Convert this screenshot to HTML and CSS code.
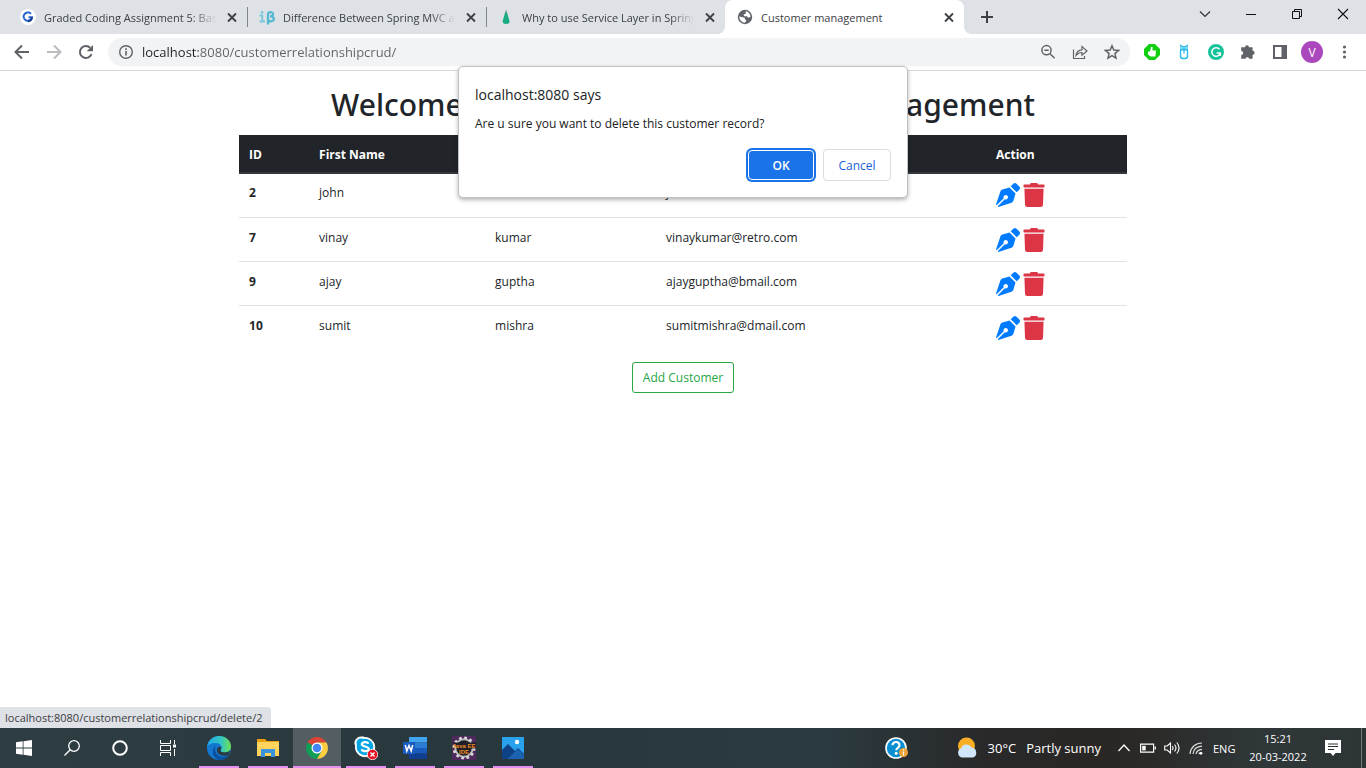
FILE: index.html
```html
<!DOCTYPE html>
<html lang="en">
<head>
<meta charset="utf-8">
<title>Customer management</title>
<link rel="stylesheet" href="styles.css">
</head>
<body>
<svg class="defs" aria-hidden="true">
  <symbol id="close" viewBox="0 0 16 16"><path d="M4 4.500l8 8M12 4.500l-8 8" stroke="#3c4043" stroke-width="1.8" fill="none"/></symbol>
  <symbol id="pen" viewBox="0 0 512 512"><path fill="#007bff" d="M136.6 138.79a64.003 64.003 0 0 0-43.31 41.35L0 460l14.69 14.69L164.8 324.58c-2.99-6.26-4.8-13.18-4.8-20.58 0-26.51 21.49-48 48-48s48 21.49 48 48-21.49 48-48 48c-7.4 0-14.32-1.81-20.58-4.8L37.31 497.31 52 512l279.86-93.29a64.003 64.003 0 0 0 41.35-43.31L416 224 288 96l-151.4 42.79zm361.34-64.62l-60.11-60.11c-18.75-18.75-49.16-18.75-67.91 0l-56.55 56.55 128.02 128.02 56.55-56.55c18.75-18.75 18.75-49.15 0-67.91z"/></symbol>
  <symbol id="trash" viewBox="0 0 448 512"><path fill="#dc3545" d="M432 32H312l-9.4-18.7A24 24 0 0 0 281.1 0H166.8a23.72 23.72 0 0 0-21.4 13.3L136 32H16A16 16 0 0 0 0 48v32a16 16 0 0 0 16 16h416a16 16 0 0 0 16-16V48a16 16 0 0 0-16-16zM32 467a48 48 0 0 0 47.9 45h288.200a48 48 0 0 0 47.9-45L428 124H20z"/></symbol>
</svg>

<header class="browser">
  <div class="tabstrip">
    <div class="tabs">
      <div class="tab">
        <svg class="i16" viewBox="0 0 16 16"><circle cx="8" cy="8" r="8" fill="#fff"/><path d="M11 4.800A4.200 4.200 0 1 0 12 8.200H8.500" fill="none" stroke="#2a66d0" stroke-width="2"/><path d="M12 8.200A4.200 4.200 0 0 1 8 12.200" fill="none" stroke="#14398f" stroke-width="2"/></svg>
        <button class="tab-title fade">Graded Coding Assignment 5: Basic</button>
        <button class="tab-close" aria-label="Close tab"><svg class="i16"><use href="#close"/></svg></button>
      </div>
      <div class="tab divided">
        <svg class="i16" viewBox="0 0 16 16"><path d="M.5 6.500h2.800v6M.5 12.500h5.500" fill="none" stroke="#7cc8dc" stroke-width="2"/><circle cx="3.100" cy="3.500" r="1.400" fill="#7cc8dc"/><path d="M9 15.500V5.500C9 2.300 14 2.300 14 5.200C14 7 12.500 7.300 11 7.300C16 7.300 16 12.300 12 12.300C10.500 12.300 9.500 11.700 9 11" fill="none" stroke="#55b9d3" stroke-width="2.300"/></svg>
        <button class="tab-title fade">Difference Between Spring MVC and</button>
        <button class="tab-close" aria-label="Close tab"><svg class="i16"><use href="#close"/></svg></button>
      </div>
      <div class="tab divided">
        <svg class="i16" viewBox="0 0 16 16"><path d="M7.300 3h1.600L11.500 12q.3 3-3.400 3t-3.400-3z" fill="#1bab82"/><path d="M7.600 1h1v2.500h-1z" fill="#888"/></svg>
        <button class="tab-title fade">Why to use Service Layer in Spring</button>
        <button class="tab-close" aria-label="Close tab"><svg class="i16"><use href="#close"/></svg></button>
      </div>
      <div class="tab active">
        <svg class="i16" viewBox="0 0 16 16"><circle cx="8" cy="8" r="7.200" fill="#5f6368"/><path d="M8.500 2.300C11 2.500 13.500 5 13.600 7.800L11.500 8.800 9.800 7.300H7.500L6.400 5.700 8.800 4.500zM2.300 7.500L5.500 8.200 7.800 8.700V10.500L9.500 11 8 13.700C4.800 13.600 2.300 11 2.300 7.500z" fill="#fff"/></svg>
        <button class="tab-title">Customer management</button>
        <button class="tab-close" aria-label="Close tab"><svg class="i16"><use href="#close"/></svg></button>
      </div>
      <button class="new-tab" aria-label="New tab"><svg class="i16" viewBox="0 0 16 16"><path d="M8 2v12M2 8h12" stroke="#3c4043" stroke-width="2"/></svg></button>
    </div>
    <div class="window-buttons">
      <button aria-label="Search tabs"><svg class="i16" viewBox="0 0 16 16"><path d="M3 5.500l5 5 5-5" fill="none" stroke="#333" stroke-width="1.200"/></svg></button>
      <button aria-label="Minimize"><svg class="i16" viewBox="0 0 16 16"><path d="M3 8.500h10" stroke="#111"/></svg></button>
      <button aria-label="Restore"><svg class="i16" viewBox="0 0 16 16"><path d="M3.500 5.500h7v7h-7zM5.500 5.500v-2h7v7h-2" fill="none" stroke="#111"/></svg></button>
      <button aria-label="Close"><svg class="i16" viewBox="0 0 16 16"><path d="M3 3l10 10M13 3L3 13" stroke="#111" stroke-width="1.100"/></svg></button>
    </div>
  </div>
  <div class="toolbar">
    <button class="tool" aria-label="Back"><svg class="i16" viewBox="0 0 16 16"><path d="M15 8H2M8 1.500L1.500 8 8 14.500" fill="none" stroke="#5f6368" stroke-width="2"/></svg></button>
    <button class="tool" aria-label="Forward"><svg class="i16" viewBox="0 0 16 16"><path d="M1 8h13M8 1.500L14.500 8 8 14.500" fill="none" stroke="#bbbdc0" stroke-width="2"/></svg></button>
    <button class="tool" aria-label="Reload"><svg class="i16" viewBox="0 0 16 16"><path d="M13.500 10.200A6 6 0 1 1 12.200 3.800" fill="none" stroke="#5f6368" stroke-width="2"/><path d="M15 1v6.300H8.700z" fill="#5f6368"/></svg></button>
    <div class="omnibox">
      <button class="tool" aria-label="Site information"><svg class="i16" viewBox="0 0 16 16"><circle cx="8" cy="8" r="6.300" fill="none" stroke="#5f6368" stroke-width="1.400"/><path d="M8 7v4.500M8 4.300v1.600" stroke="#5f6368" stroke-width="1.600"/></svg></button>
      <input class="url" type="text" aria-label="Address" value="localhost:8080/customerrelationshipcrud/">
      <button class="tool" aria-label="Zoom"><svg class="i16" viewBox="0 0 16 16"><circle cx="6.500" cy="6.200" r="4.600" fill="none" stroke="#5f6368" stroke-width="1.500"/><path d="M4.300 6.200h4.400M10 9.700l4.600 4.600" stroke="#5f6368" stroke-width="1.500"/></svg></button>
      <button class="tool" aria-label="Share"><svg class="i16" viewBox="0 0 16 16"><path d="M1.500 5.500v9h11V12M4 11.500C4.300 8 6.500 6 10 5.800V2.500L15 7l-5 4.300V8.500C7.300 8.500 5.500 9.500 4 11.500z" fill="none" stroke="#5f6368" stroke-width="1.200"/></svg></button>
      <button class="tool" aria-label="Bookmark"><svg class="i16" viewBox="0 0 16 16"><path d="M8 1.800l1.800 4.300 4.700.4-3.600 3.100 1.100 4.600L8 11.700l-4 2.500 1.100-4.600L1.500 6.500l4.700-.4z" fill="none" stroke="#5f6368" stroke-width="1.500"/></svg></button>
    </div>
    <button class="tool ext" aria-label="Like extension"><svg class="i16" viewBox="0 0 16 16"><path d="M5 0h6l5 5v6l-5 5H5l-5-5V5z" fill="#12cf12"/><path d="M4 7.500h2L7 3h1.500v3.500H12l-.6 6H6.500L4 10.500z" fill="#fff"/></svg></button>
    <button class="tool ext" aria-label="Owl extension"><svg class="i16" viewBox="0 0 16 16"><path d="M4.500 6.500V12q0 2.500 2.500 2.500h2q2.500 0 2.500-2.500V6.500M4 5.800h8" fill="none" stroke="#27bcea" stroke-width="1.400"/><path d="M4 1l4 2.300L12 1v4H4z" fill="#7fd8f2"/><path d="M4 1l2.500 1.500h3L12 1M8 3.500v6" fill="none" stroke="#27bcea" stroke-width="1.200"/></svg></button>
    <button class="tool ext" aria-label="Grammar extension"><svg class="i16" viewBox="0 0 16 16"><circle cx="8" cy="8" r="8" fill="#15c39a"/><path d="M11.500 5.300A4.300 4.300 0 1 0 12.300 9H8.700M12.300 8.500V12" fill="none" stroke="#fff" stroke-width="1.500"/></svg></button>
    <button class="tool ext" aria-label="Extensions"><svg class="i16" viewBox="0 0 16 16"><path d="M5 3.300a2 2 0 0 1 4 0h3.600v3.500a2 2 0 0 1 0 4.100v3.800H9.200a1.900 1.900 0 0 0-3.700 0H1.200v-3.600a2 2 0 0 0 0-4V3.300z" fill="#5f6368"/></svg></button>
    <button class="tool ext" aria-label="Side panel"><svg class="i16" viewBox="0 0 16 16"><path d="M1 1h14v14H1zM3 3v10h6.500V3z" fill="#5f6368" fill-rule="evenodd"/></svg></button>
    <button class="tool ext avatar" aria-label="Profile">V</button>
    <button class="tool ext" aria-label="Menu"><svg class="i16" viewBox="0 0 16 16"><circle cx="8.500" cy="3" r="1.600" fill="#5f6368"/><circle cx="8.500" cy="8" r="1.600" fill="#5f6368"/><circle cx="8.500" cy="13" r="1.600" fill="#5f6368"/></svg></button>
  </div>
</header>

<main class="page">
  <h1>Welcome to Customer Relationship Management</h1>
  <table>
    <colgroup><col class="c-id"><col class="c-first"><col class="c-last"><col class="c-mail"><col class="c-action"></colgroup>
    <thead><tr><th scope="col">ID</th><th scope="col">First Name</th><th scope="col">Last Name</th><th scope="col">Email</th><th scope="col">Action</th></tr></thead>
    <tbody>
      <tr><th scope="row">2</th><td>john</td><td>cena</td><td>johncena@mail.com</td><td><div class="actions"><a href="#" aria-label="Edit"><svg class="pen"><use href="#pen"/></svg></a><a href="#" aria-label="Delete"><svg class="trash"><use href="#trash"/></svg></a></div></td></tr>
      <tr><th scope="row">7</th><td>vinay</td><td>kumar</td><td>vinaykumar@retro.com</td><td><div class="actions"><a href="#" aria-label="Edit"><svg class="pen"><use href="#pen"/></svg></a><a href="#" aria-label="Delete"><svg class="trash"><use href="#trash"/></svg></a></div></td></tr>
      <tr><th scope="row">9</th><td>ajay</td><td>guptha</td><td>ajayguptha@bmail.com</td><td><div class="actions"><a href="#" aria-label="Edit"><svg class="pen"><use href="#pen"/></svg></a><a href="#" aria-label="Delete"><svg class="trash"><use href="#trash"/></svg></a></div></td></tr>
      <tr><th scope="row">10</th><td>sumit</td><td>mishra</td><td>sumitmishra@dmail.com</td><td><div class="actions"><a href="#" aria-label="Edit"><svg class="pen"><use href="#pen"/></svg></a><a href="#" aria-label="Delete"><svg class="trash"><use href="#trash"/></svg></a></div></td></tr>
    </tbody>
  </table>
  <button class="add">Add Customer</button>
  <div class="status">localhost:8080/customerrelationshipcrud/delete/2</div>
</main>

<div class="dialog" role="alertdialog" aria-labelledby="dlg-title" aria-describedby="dlg-text">
  <h2 id="dlg-title">localhost:8080 says</h2>
  <p id="dlg-text">Are u sure you want to delete this customer record?</p>
  <div class="dialog-buttons"><button class="ok">OK</button><button class="cancel">Cancel</button></div>
</div>

<footer class="taskbar">
  <div class="system">
    <button aria-label="Start"><svg class="i16" viewBox="0 0 16 16"><path d="M0 2.300L6.700 1.300v6.300H0zM7.500 1.200L16 0v7.600H7.500zM0 8.400h6.700v6.300L0 13.700zM7.500 8.400H16V16l-8.500-1.200z" fill="#fff"/></svg></button>
    <button aria-label="Search"><svg class="i16" viewBox="0 0 16 16"><circle cx="10" cy="6" r="5.300" fill="none" stroke="#fff" stroke-width="1.300"/><path d="M6.200 9.800L.5 15.500" stroke="#fff" stroke-width="1.300"/></svg></button>
    <button aria-label="Cortana"><svg class="i16" viewBox="0 0 16 16"><circle cx="8" cy="8" r="6.800" fill="none" stroke="#fff" stroke-width="2"/></svg></button>
    <button aria-label="Task view"><svg class="i16" viewBox="0 0 16 16"><path d="M.5 0v3.500h10V0M.5 16v-3.500h10V16M.5 5.500h10v5H.5zM14.500 0v4M14.500 9v7" fill="none" stroke="#fff"/><path d="M13 4.500h3v3h-3z" fill="#fff"/></svg></button>
  </div>
  <div class="apps">
    <button aria-label="Edge"><svg class="i24" viewBox="0 0 24 24"><defs><linearGradient id="e1"><stop offset="0" stop-color="#1fa9e8"/><stop offset=".6" stop-color="#35c8c0"/><stop offset="1" stop-color="#6fe04c"/></linearGradient></defs><circle cx="12" cy="12" r="12" fill="#1377cf"/><path d="M.2 11C1 4 6 0 12 0c7 0 12 5 12 10.500 0 4-3 6-6.300 6-2.500 0-4.200-.9-4.200-1.800 0-.8 1.200-1.200 1.200-3.200 0-2.700-2.700-4.500-6-4.500C4 7 1 8.700.2 11z" fill="url(#e1)"/><path d="M9 9c-2 3-1 8 2.500 10.500 3 2 7 2 10.500-1C19.500 22.500 16 24 12.500 24 7.500 23 5.500 18.500 6 14.500 6.400 12 7.500 10 9 9z" fill="#0b4fa0"/><path d="M13.500 14.700c.5 1.500 5.500 3.200 9.500-.2l-1 4c-4 2.500-10 1.500-11.800-2.700-.8-2.400.5-5 2.800-5.200 2 1.400.7 2.500.5 4.100z" fill="#2b3a3f"/></svg></button>
    <button aria-label="File Explorer"><svg class="i24" viewBox="0 0 24 24"><path d="M1 3h8l2 2h12v4H1z" fill="#e8a10c"/><path d="M1 6h22v14H1z" fill="#ffd45e"/><path d="M5 13h14v8h-4v-4H9v4H5z" fill="#3a94dc"/></svg></button>
    <button class="current" aria-label="Chrome"><svg class="i24" viewBox="0 0 24 24"><path d="M12 12L2.500 6.500A11 11 0 0 1 21.500 6.500H12z" fill="#db4437"/><path d="M12 12L2.500 6.500A11 11 0 0 0 12 23l4.800-8.300z" fill="#0f9d58"/><path d="M12 6.500h9.500A11 11 0 0 1 12 23l4.800-8.300z" fill="#ffcd40"/><circle cx="12" cy="12" r="5.500" fill="#fff"/><circle cx="12" cy="12" r="4.300" fill="#4285f4"/></svg></button>
    <button aria-label="Skype"><svg class="i24" viewBox="0 0 24 24"><path d="M7 1a6 6 0 0 1 4 .6A9.500 9.500 0 0 1 20.500 13 6 6 0 0 1 12.500 20.600 9.500 9.500 0 0 1 1.600 9.800 6 6 0 0 1 7 1z" fill="#fff" stroke="#fff"/><circle cx="11" cy="11" r="8.300" fill="#00a5e3"/><circle cx="7" cy="7" r="4.500" fill="#00a5e3"/><path d="M14.500 7.800C13.500 5.500 7.500 5.700 7.800 8.300c.3 2.700 7 1.800 7 4.700 0 2.700-6 3-7.300.2" fill="none" stroke="#fff" stroke-width="2.200"/><circle cx="18.500" cy="18.500" r="5.200" fill="#e81123" stroke="#fff" stroke-width=".8"/><path d="M16.500 16.500l4 4M20.500 16.500l-4 4" stroke="#fff" stroke-width="1.400"/></svg></button>
    <button aria-label="Word"><svg class="i24" viewBox="0 0 24 24"><path d="M6 1h18v5.500H6z" fill="#41a5ee"/><path d="M6 6.500h18V12H6z" fill="#2b7cd3"/><path d="M6 12h18v5.500H6z" fill="#185abd"/><path d="M6 17.500h18V23H6z" fill="#103f91"/><path d="M0 6h12v12H0z" fill="#185abd"/><path d="M2.300 9l1.500 6L6 9.500 8.200 15l1.500-6" fill="none" stroke="#fff" stroke-width="1.500"/></svg></button>
    <button aria-label="Eclipse Java EE IDE" class="eclipse"><svg class="i24" viewBox="0 0 24 24"><path d="M0 0h24v24H0z" fill="#4e2a5c"/><circle cx="12" cy="12" r="8.700" fill="#20202a" stroke="#bbb" stroke-width="2"/><circle cx="12" cy="12" r="10.200" fill="none" stroke="#ddd" stroke-width="2.500" stroke-dasharray="2.670 2.670"/><path d="M0 6.500h24v6H6z" fill="#20202a"/><text x="12" y="11.500" text-anchor="middle">Java EE</text><text x="12" y="18" text-anchor="middle">IDE</text></svg></button>
    <button aria-label="Photos"><svg class="i24" viewBox="0 0 24 24"><path d="M1 1h22v22H1z" fill="#2aa1ec"/><path d="M1 14l6-6 7 7 3-3 6 6v5H1z" fill="#0f4284"/><path d="M9.500 20l7.500-7 6 6v4H6.500z" fill="#1b62b1"/><circle cx="16" cy="6" r="2.200" fill="#fff"/></svg></button>
  </div>
  <div class="tray">
    <button class="help" aria-label="Get help"><svg class="i24" viewBox="0 0 24 24"><circle cx="12" cy="12" r="10" fill="#0a8fd0" stroke="#fff" stroke-width="1.600"/><path d="M8.500 9.300c0-4.500 7-4.300 7 0 0 2.500-3.300 2.500-3.300 5" fill="none" stroke="#fff" stroke-width="2.200"/><circle cx="12.200" cy="17.300" r="1.500" fill="#fff"/><circle cx="19.500" cy="16.500" r="4.500" fill="#eea236"/><path d="M19.500 15.500v4M19.500 13.300v1.300" stroke="#fff" stroke-width="1.300"/></svg></button>
    <button class="weather"><svg class="sun" viewBox="0 0 22 22"><circle cx="10.500" cy="9" r="8.500" fill="#f9ae24"/><path d="M5.500 20.500a5 5 0 0 1-.5-9.300 5.800 5.800 0 0 1 10.500-.7 5.200 5.200 0 0 1 1.500 10z" fill="#cfe6fb"/></svg><span>30°C</span><span>Partly sunny</span></button>
    <button class="t-chev" aria-label="Show hidden icons"><svg class="i16" viewBox="0 0 16 16"><path d="M2.500 11L8 5l5.500 6" fill="none" stroke="#fff" stroke-width="1.300"/></svg></button>
    <button aria-label="Battery"><svg class="i16" viewBox="0 0 16 16"><path d="M.6 4.100h13v8H.6zM15.300 6.500v3" fill="none" stroke="#fff" stroke-width="1.200"/><path d="M2.200 5.800h3.500v4.600H2.200z" fill="#fff"/></svg></button>
    <button aria-label="Volume"><svg class="i16" viewBox="0 0 16 16"><path d="M.7 6h2.500L6.500 3v10L3.200 10H.7zM8.300 6q1.500 2 0 4M10.500 4.500q3 3.500 0 7M12.800 2.500q4.500 5.500 0 11" fill="none" stroke="#fff" stroke-width="1.100"/></svg></button>
    <button aria-label="Network"><svg class="i16" viewBox="0 0 16 16"><path d="M2 14C2.500 7.500 7.500 3 14 3M5 14C5.500 9.500 9 6.500 14 6.200M8 14C8.500 11.500 10.500 9.800 14 9.400M10.800 14c.3-1 1.200-1.600 2.500-1.700" fill="none" stroke="#ddd" stroke-width="1.200"/><circle cx="13" cy="13.300" r="1.400" fill="#fff"/></svg></button>
    <button class="lang">ENG</button>
    <button class="clock"><span>15:21</span><span>20-03-2022</span></button>
    <button class="notes" aria-label="Notifications"><svg class="i16" viewBox="0 0 16 16"><path d="M0 0h16v13h-5.500L8 16l-2.500-3H0z" fill="#fff"/><path d="M3 4h10M3 6.500h10M3 9.500h6" stroke="#2b3133"/></svg></button>
  </div>
</footer>
</body>
</html>
```
FILE: styles.css
```css
* { box-sizing: border-box; }
body {
  margin: 0;
  min-height: 100vh;
  display: flex;
  flex-direction: column;
  position: relative;
  background: #fff;
  color: #212529;
  font-family: "Open Sans", "Noto Sans", sans-serif;
  font-size: 12px;
}
button, input { font: inherit; color: inherit; }
button { border: 0; padding: 0; background: none; display: flex; align-items: center; justify-content: center; white-space: nowrap; }
svg { display: block; flex: none; }
.defs { position: absolute; width: 0; height: 0; }
.i16 { width: 16px; height: 16px; }
.i24 { width: 24px; height: 24px; }

.tabstrip { height: 34px; display: flex; justify-content: space-between; background: #dee1e6; color: #3c4043; font-size: 11px; }
.tabs { display: flex; padding-left: 8px; min-width: 0; }
.tab { width: 239px; display: flex; align-items: center; gap: 8px; padding: 0 7px 0 12px; }
.tab-title { flex: 1; min-width: 0; overflow: hidden; justify-content: flex-start; }
.fade { -webkit-mask-image: linear-gradient(to left, transparent, #000 24px); mask-image: linear-gradient(to left, transparent, #000 24px); }
.divided { background: linear-gradient(#80868b, #80868b) 0 50% / 1px 20px no-repeat; }
.active { position: relative; background: #fff; border-radius: 8px 8px 0 0; }
.active::before, .active::after { content: ""; position: absolute; bottom: 0; width: 8px; height: 8px; }
.active::before { right: 100%; background: radial-gradient(circle at 0 0, transparent 8px, #fff 8px); }
.active::after { left: 100%; background: radial-gradient(circle at 100% 0, transparent 8px, #fff 8px); }
.new-tab { width: 46px; }
.window-buttons { display: flex; padding-bottom: 6px; }
.window-buttons button { width: 46px; }

.toolbar { display: flex; align-items: center; height: 37px; padding: 0 6px; border-bottom: 1px solid #d5d7da; }
.tool { width: 32px; height: 28px; flex: none; }
.omnibox { flex: 1; display: flex; align-items: center; height: 28px; margin: 0 6px; padding: 0 2px; border-radius: 14px; background: #f1f3f4; }
.url {
  flex: 1;
  min-width: 0;
  border: 0;
  padding: 0;
  font-size: 13px;
  color: transparent;
  background: linear-gradient(to right, #202124 56px, #5f6368 56px);
  -webkit-background-clip: text;
  background-clip: text;
}
.avatar { width: 22px; height: 22px; margin: 0 5px; border-radius: 50%; background: #ab47bc; color: #fff; }

.page { flex: 1; position: relative; display: flex; flex-direction: column; align-items: center; }
h1 { margin: 14px 0 10px; font-family: "Noto Sans", "Open Sans", sans-serif; font-size: 30px; line-height: 40px; font-weight: 500; text-align: center; }
table { width: 65%; border-collapse: collapse; table-layout: fixed; }
.c-id { width: 70px; }
.c-first { width: 176px; }
.c-last { width: 171px; }
.c-mail { width: 330px; }
th, td { padding: 9px 10px; text-align: left; vertical-align: top; line-height: 20px; }
th { font-weight: 700; }
thead { background: #212529; color: #fff; border-bottom: 2px solid #32383e; }
thead th { padding: 10px 10px 7px; }
tbody tr { height: 44px; }
tbody tr + tr { border-top: 1px solid #dee2e6; }
tbody tr + tr > * { padding-top: 10px; }
.actions { display: flex; gap: 3px; }
.pen { width: 24px; height: 24px; }
.trash { width: 22px; height: 24px; }
.add { margin-top: 13px; padding: 0 10px; height: 31px; border: 1px solid #28a745; border-radius: 3px; color: #28a745; background: #fff; }
.status { position: absolute; left: 0; bottom: 0; padding: 0 8px 0 5px; font-size: 11px; line-height: 21px; border-radius: 0 4px 0 0; background: #dee1e6; color: #3c4043; }

.dialog {
  position: absolute;
  top: 66px;
  left: 50%;
  transform: translateX(-50%);
  width: 450px;
  padding: 16px;
  border: 1px solid #bfc1c4;
  border-radius: 5px;
  background: #fff;
  color: #202124;
  box-shadow: 0 2px 4px rgba(0, 0, 0, .3);
}
.dialog h2 { margin: 0 0 9px; font-size: 14px; line-height: 24px; font-weight: 400; }
.dialog p { margin: 0 0 17px; line-height: 16px; }
.dialog-buttons { display: flex; justify-content: flex-end; gap: 9px; }
.dialog-buttons button { height: 32px; width: 68px; border-radius: 4px; font-size: 12px; }
.dialog-buttons .ok { width: 66px; height: 30px; margin-top: 1px; border: 1px solid #fff; background: #1a73e8; color: #fff; font-weight: 600; box-shadow: 0 0 0 2px #1a73e8; }
.cancel { border: 1px solid #dadce0; background: #fff; color: #1a5fd8; font-weight: 500; }

.taskbar { height: 40px; display: flex; background: linear-gradient(to right, #2d3d42, #28373c 40%, #2b3b40 60%, #29292a 72%, #2a2724 82%, #2f3739 92%, #2e3536); color: #fff; }
.system, .apps, .tray { display: flex; }
.system button, .apps button { width: 48px; height: 40px; }
.apps { gap: 1px; padding-left: 3px; }
.apps button { background: linear-gradient(#e68ff0, #e68ff0) 50% 100% / 40px 2px no-repeat; }
.apps .current { background: linear-gradient(#e68ff0, #e68ff0) 50% 100% / 48px 2px no-repeat #535e62; }
.eclipse text { font-family: "Liberation Sans", sans-serif; font-size: 6px; font-weight: 700; fill: #f08a24; }
.tray { margin: 0 4px 0 auto; align-items: center; border-right: 1px solid #777; }
.tray > button { width: 24px; height: 40px; }
.tray .help { margin-right: 48px; }
.tray .weather { width: auto; gap: 10px; font-size: 13px; margin-right: 11px; }
.sun { width: 22px; height: 22px; }
.tray .lang { width: 38px; padding-left: 5px; font-size: 11px; justify-content: flex-start; }
.tray .clock { width: 64px; flex-direction: column; font-size: 11px; line-height: 18px; }
.tray .notes { width: 46px; margin-right: 5px; }
```
